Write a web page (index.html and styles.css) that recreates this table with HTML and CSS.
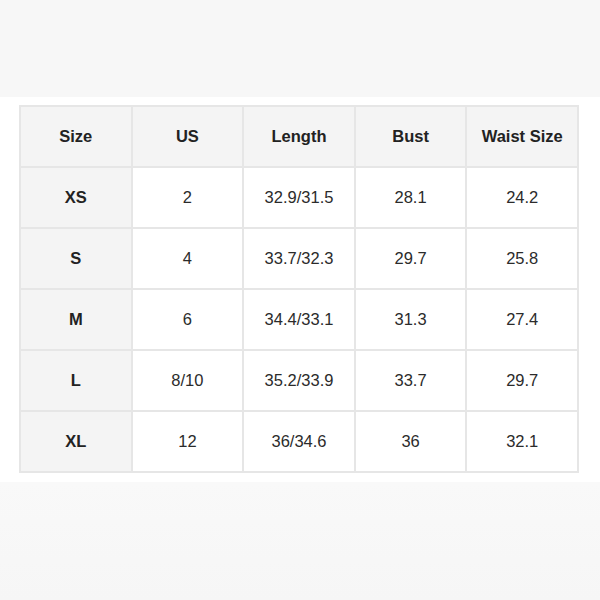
FILE: index.html
```html
<!DOCTYPE html>
<html lang="en">
<head>
<meta charset="utf-8">
<title>Size Chart</title>
<link rel="stylesheet" href="styles.css">
</head>
<body>
<div class="page">
  <div class="band band-top"></div>
  <div class="main">
    <table class="chart">
      <thead>
        <tr><th>Size</th><th>US</th><th>Length</th><th>Bust</th><th>Waist Size</th></tr>
      </thead>
      <tbody>
        <tr><th>XS</th><td>2</td><td>32.9/31.5</td><td>28.1</td><td>24.2</td></tr>
        <tr><th>S</th><td>4</td><td>33.7/32.3</td><td>29.7</td><td>25.8</td></tr>
        <tr><th>M</th><td>6</td><td>34.4/33.1</td><td>31.3</td><td>27.4</td></tr>
        <tr><th>L</th><td>8/10</td><td>35.2/33.9</td><td>33.7</td><td>29.7</td></tr>
        <tr><th>XL</th><td>12</td><td>36/34.6</td><td>36</td><td>32.1</td></tr>
      </tbody>
    </table>
  </div>
  <div class="band band-bottom"></div>
</div>
</body>
</html>
```

FILE: styles.css
```css
html, body {
  margin: 0;
  padding: 0;
  background: #ffffff;
}

.page {
  width: 600px;
  height: 600px;
  display: flex;
  flex-direction: column;
  font-family: "Liberation Sans", Arial, sans-serif;
  color: #2b2b2b;
}

.band {
  background: #f7f7f7;
}

.band-top {
  height: 97px;
  flex: none;
}

.band-bottom {
  flex: 1;
  background: linear-gradient(#f9f9f9, #f6f6f6);
}

.main {
  padding: 8px 21px 9px 19px;
}

.chart {
  width: 560px;
  border-collapse: collapse;
  table-layout: fixed;
  border: 2px solid #e4e4e4;
}

.chart th,
.chart td {
  height: 59px;
  padding: 0;
  border: 2px solid #e6e6e6;
  text-align: center;
  vertical-align: middle;
  font-size: 16.5px;
}

.chart th {
  font-weight: bold;
  background: #f4f4f4;
  color: #222222;
}

.chart td {
  background: #ffffff;
  font-weight: normal;
}
```
